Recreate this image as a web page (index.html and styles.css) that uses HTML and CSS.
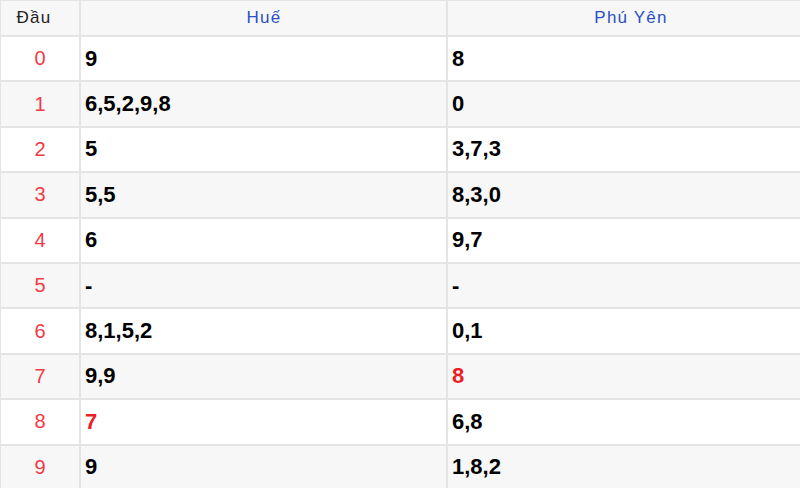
FILE: index.html
```html
<!DOCTYPE html>
<html lang="vi">
<head>
<meta charset="utf-8">
<link rel="stylesheet" href="styles.css">
</head>
<body>
<table class="loto">
  <colgroup><col class="c-head"><col class="c-prov"><col class="c-prov"></colgroup>
  <thead>
    <tr><th class="dau">Đầu</th><th>Huế</th><th>Phú Yên</th></tr>
  </thead>
  <tbody>
    <tr><td class="num">0</td><td>9</td><td>8</td></tr>
    <tr><td class="num">1</td><td>6,5,2,9,8</td><td>0</td></tr>
    <tr><td class="num">2</td><td>5</td><td>3,7,3</td></tr>
    <tr><td class="num">3</td><td>5,5</td><td>8,3,0</td></tr>
    <tr><td class="num">4</td><td>6</td><td>9,7</td></tr>
    <tr><td class="num">5</td><td>-</td><td>-</td></tr>
    <tr><td class="num">6</td><td>8,1,5,2</td><td>0,1</td></tr>
    <tr><td class="num">7</td><td>9,9</td><td class="hot">8</td></tr>
    <tr><td class="num">8</td><td class="hot">7</td><td>6,8</td></tr>
    <tr><td class="num">9</td><td>9</td><td>1,8,2</td></tr>
  </tbody>
</table>
</body>
</html>
```
FILE: styles.css
```css
html, body {
  margin: 0;
  padding: 0;
  background: #fff;
  overflow: hidden;
}
body {
  width: 800px;
  height: 488px;
  font-family: "Liberation Sans", Arial, sans-serif;
}
.loto {
  border-collapse: collapse;
  width: 814px;
  table-layout: fixed;
  margin-top: -1px;
  margin-left: -1px;
}
.c-head { width: 80px; }
.c-prov { width: 367px; }
.loto th, .loto td {
  border: 2px solid #e4e4e4;
  padding: 0 0 0 4px;
}
.loto th {
  height: 34px;
  background: #f7f7f7;
  color: #2b4fc6;
  font-weight: normal;
  font-size: 17px;
  letter-spacing: 1.2px;
  text-align: center;
  padding: 0 0 0 1px;
}
.loto th.dau {
  color: #222;
  padding: 0 12px 0 0;
}
.loto td {
  height: 43.4px;
  font-size: 22px;
  font-weight: bold;
  color: #000;
}
.loto tbody tr:nth-child(even) td {
  background: #f7f7f7;
}
.loto td.num {
  text-align: center;
  font-weight: normal;
  font-size: 20px;
  color: #f03a46;
  padding: 0;
}
.loto td.hot {
  color: #ee1c25;
}
```
